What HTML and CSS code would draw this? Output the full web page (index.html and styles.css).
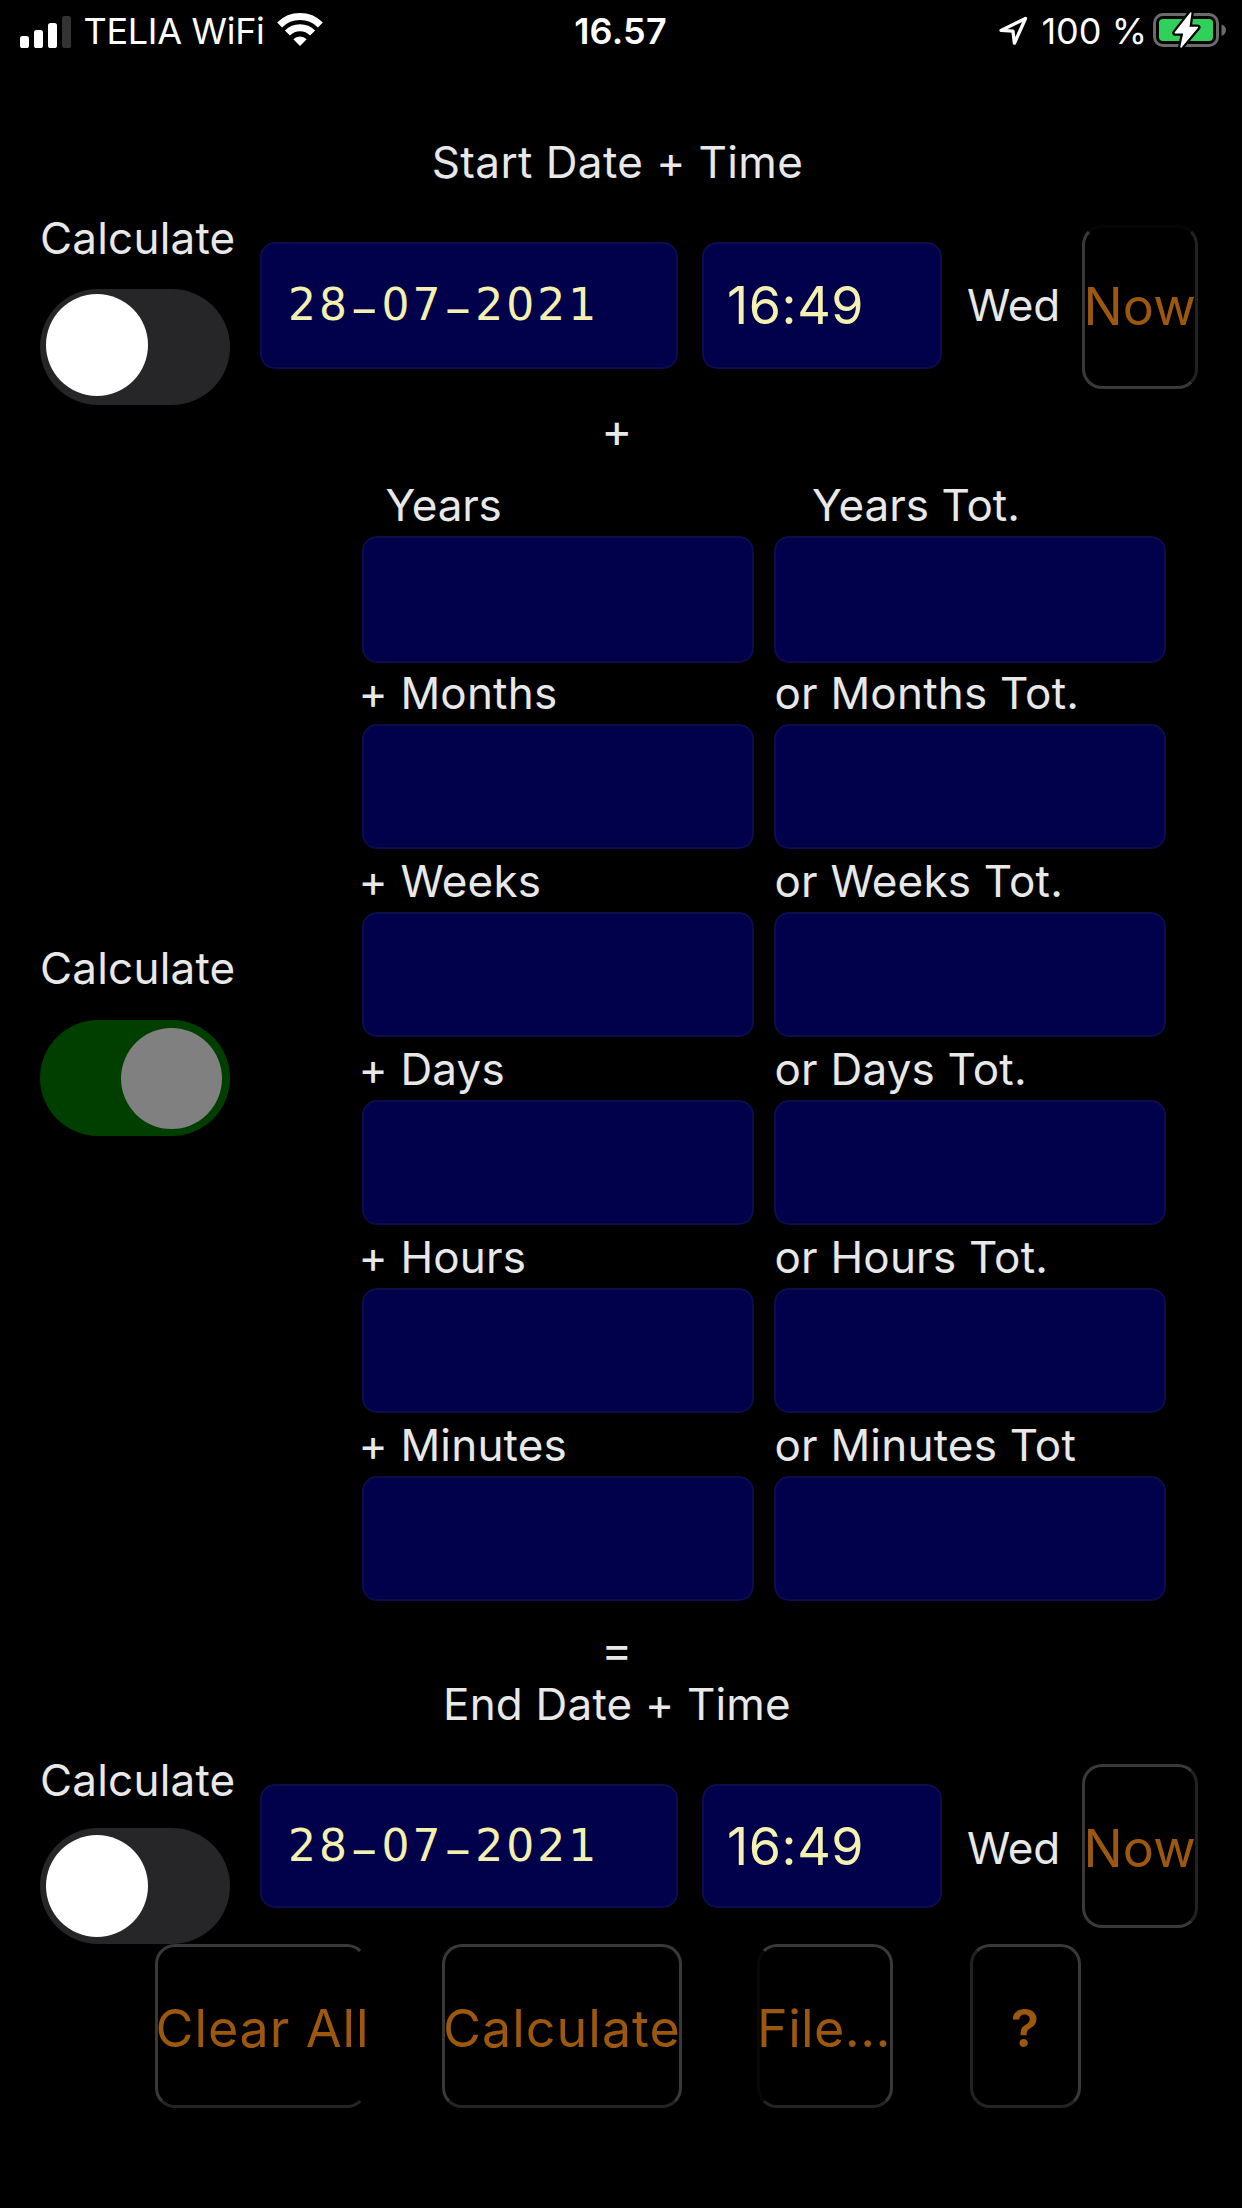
FILE: index.html
```html
<!DOCTYPE html>
<html lang="en">
<head>
<meta charset="utf-8">
<title>Date + Time Calculator</title>
<link rel="stylesheet" href="styles.css">
</head>
<body>
<header class="status">
  <div class="status-left">
    <svg class="signal" width="52" height="33" viewBox="0 0 52 33">
      <rect x="0" y="21" width="9" height="12" rx="2.6" fill="#fff"/>
      <rect x="14" y="15" width="9" height="18" rx="2.6" fill="#fff"/>
      <rect x="28" y="8" width="9" height="25" rx="2.6" fill="#fff"/>
      <rect x="42" y="1" width="9" height="32" rx="2.6" fill="#333"/>
    </svg>
    <span class="carrier">TELIA WiFi</span>
    <svg class="wifi" width="46" height="33" viewBox="0 0 46 33">
      <g fill="none" stroke="#fff" stroke-width="7">
        <path d="M2.6 11.9A29 29 0 0 1 43.4 11.9"/>
        <path d="M10.4 20A17.6 17.6 0 0 1 35.6 20"/>
      </g>
      <path d="M23 33L16.3 26.3A9.6 9.6 0 0 1 29.7 26.3Z" fill="#fff"/>
    </svg>
  </div>
  <div class="clock">16.57</div>
  <div class="status-right">
    <svg class="location" width="30" height="30" viewBox="0 0 30 30">
      <path d="M27.5 2.5L3 14.4L15 15.2L16.4 27.2Z" fill="none" stroke="#fff" stroke-width="3.3" stroke-linejoin="round"/>
    </svg>
    <span class="percent">100 %</span>
    <svg class="battery" width="74" height="36" viewBox="0 0 74 36">
      <rect x="1.5" y="2.5" width="63" height="31" rx="8.5" fill="none" stroke="#6b6b6b" stroke-width="3"/>
      <path d="M68.5 12.5Q73 14 73 18T68.5 24Z" fill="#6b6b6b"/>
      <rect x="6" y="7" width="54" height="22" rx="4" fill="#30d158"/>
      <path d="M37.8 1L22.3 20.8H31L28 35L44.5 15.4H35.7Z" fill="#fff" stroke="#000" stroke-width="6" stroke-linejoin="round" paint-order="stroke"/>
      <path d="M37.8 1L22.3 20.8H31L28 35L44.5 15.4H35.7Z" fill="#fff" stroke="#fff" stroke-width="1.4" stroke-linejoin="round"/>
    </svg>
  </div>
</header>

<main class="app">
  <h1 class="title">Start Date + Time</h1>
  <section class="moment">
    <div class="switch-group">
      <span class="label">Calculate</span>
      <div class="switch"><i class="knob"></i></div>
    </div>
    <div class="field date">28<span class="dash">–</span>07<span class="dash">–</span>2021</div>
    <div class="field time">16:49</div>
    <span class="label weekday">Wed</span>
    <div class="button now now-start">Now</div>
  </section>

  <div class="operator">+</div>

  <section class="duration">
    <div class="switch-group">
      <span class="label">Calculate</span>
      <div class="switch on"><i class="knob"></i></div>
    </div>
    <div class="units">
      <div class="unit first"><span class="label">Years</span><div class="field"></div></div>
      <div class="unit first-total"><span class="label">Years Tot.</span><div class="field"></div></div>
      <div class="unit"><span class="label">+ Months</span><div class="field"></div></div>
      <div class="unit total"><span class="label">or Months Tot.</span><div class="field"></div></div>
      <div class="unit"><span class="label">+ Weeks</span><div class="field"></div></div>
      <div class="unit total"><span class="label">or Weeks Tot.</span><div class="field"></div></div>
      <div class="unit"><span class="label">+ Days</span><div class="field"></div></div>
      <div class="unit total"><span class="label">or Days Tot.</span><div class="field"></div></div>
      <div class="unit"><span class="label">+ Hours</span><div class="field"></div></div>
      <div class="unit total"><span class="label">or Hours Tot.</span><div class="field"></div></div>
      <div class="unit"><span class="label">+ Minutes</span><div class="field"></div></div>
      <div class="unit total"><span class="label">or Minutes Tot</span><div class="field"></div></div>
    </div>
  </section>

  <div class="operator equals">=</div>
  <h1 class="title title-end">End Date + Time</h1>
  <section class="moment end">
    <div class="switch-group">
      <span class="label">Calculate</span>
      <div class="switch"><i class="knob"></i></div>
    </div>
    <div class="field date">28<span class="dash">–</span>07<span class="dash">–</span>2021</div>
    <div class="field time">16:49</div>
    <span class="label weekday">Wed</span>
    <div class="button now">Now</div>
  </section>

  <footer class="actions">
    <div class="button clear">Clear All</div>
    <div class="button calculate">Calculate</div>
    <div class="button file">File...</div>
    <div class="button help">?</div>
  </footer>
</main>
</body>
</html>
```
FILE: styles.css
```css
* { box-sizing: border-box; }

body {
  margin: 0;
  width: 1242px;
  height: 2208px;
  overflow: hidden;
  background: #000;
  color: #e8e8e8;
  font-family: Inter, "Liberation Sans", sans-serif;
  font-size: 44px;
  line-height: 44px;
  letter-spacing: 0.2px;
  white-space: nowrap;
}

svg { display: block; }

/* Status bar */
.status {
  display: grid;
  grid-template-columns: 1fr auto 1fr;
  align-items: center;
  height: 62px;
  padding: 0 15px 0 20px;
  color: #fff;
  font-size: 36px;
  letter-spacing: 0;
}
.status-left, .status-right { display: flex; align-items: center; }
.status-right { justify-content: flex-end; }
.carrier { margin-left: 11.5px; letter-spacing: -0.3px; }
.wifi { margin-left: 12px; margin-top: -3px; }
.clock { padding-right: 6px; font-weight: 600; letter-spacing: 0.2px; }
.percent { margin: 0 6px 0 13px; }
.battery { margin-top: -2px; }

/* Headings and labels */
.app { display: flex; flex-direction: column; }
.title {
  margin: 78px 0 0;
  padding-right: 7px;
  text-align: center;
  font-size: inherit;
  font-weight: 400;
  letter-spacing: 0.4px;
}
.label { display: block; }
.operator {
  margin-top: 4px;
  padding-right: 8px;
  text-align: center;
  font-size: 47px;
}

/* Date and time rows */
.moment {
  display: flex;
  align-items: flex-start;
  height: 189px;
  margin-top: 31px;
  padding-left: 40px;
}
.switch-group {
  display: flex;
  flex-direction: column;
  gap: 30px;
  width: 191px;
}
.moment .switch-group { padding-top: 1px; gap: 29px; }
.switch {
  width: 190px;
  height: 116px;
  padding: 5px 6px;
  border-radius: 58px;
  background: #262628;
}
.knob {
  display: block;
  width: 102px;
  height: 102px;
  border-radius: 50%;
  background: #fff;
}
.switch.on { padding: 8px; background: #003f00; }
.on .knob { width: 101px; height: 101px; margin-left: auto; background: #808080; }

.field {
  height: 125px;
  border: 2px solid #0d0d4c;
  border-radius: 15px;
  background: #00004b;
  color: #f3f0b0;
}
.moment .field {
  display: flex;
  align-items: center;
  height: 127px;
  margin-top: 26.5px;
}
.moment .field.date {
  width: 418px;
  margin-left: 29px;
  padding-left: 26px;
  font-family: "DejaVu Sans", sans-serif;
  letter-spacing: 3px;
}
.dash {
  width: 31.6px;
  padding: 3px 3px 0 0;
  font-size: 52px;
  letter-spacing: 0;
  text-align: center;
}
.moment .field.time {
  width: 240px;
  margin-left: 24px;
  padding: 2px 0 0 23px;
  font-size: 52px;
  letter-spacing: 0.6px;
}
.weekday { width: 115px; margin: 68px 0 0 25px; letter-spacing: -0.3px; }

.button {
  display: flex;
  align-items: center;
  justify-content: center;
  height: 164px;
  border: 3px solid #393939;
  border-radius: 20px;
  color: #9c580f;
  font-size: 52px;
  letter-spacing: 1px;
}
.now { width: 115.5px; margin-top: 10px; border-right-color: #222; letter-spacing: 0.2px; }
.now-start { margin-top: 9.5px; border-top-color: #060606; }

/* Duration grid */
.duration { display: flex; margin-top: 21px; padding-left: 40px; }
.duration .switch-group { padding-top: 473px; }
.units {
  display: grid;
  grid-template-columns: 392px 392px;
  column-gap: 20px;
  margin-left: 130.5px;
}
.unit .label { height: 63px; margin-left: -3px; padding-top: 10px; }
.total .label { margin-left: 1px; }
.first .label { margin-left: 24px; letter-spacing: -0.2px; }
.first-total .label { margin-left: 38.5px; letter-spacing: 0; }
/* The top pair of fields is slightly taller and eats into the label below */
.first .field, .first-total .field { height: 127px; margin-bottom: -2px; }

/* End row */
.equals { margin-top: 26px; }
.title-end { margin-top: 11px; padding-right: 8px; letter-spacing: 0.2px; }
.end { height: 186px; margin-top: 32px; }
.moment.end .switch-group { padding-top: 0; gap: 26px; }
.end .switch { padding-top: 7px; }
.end .field { height: 124px; margin-top: 26px; }
.end .weekday { margin-top: 68px; }
.end .now { margin-top: 6px; padding-top: 5px; }

.actions { display: flex; padding-left: 154.5px; }
.actions .button { padding-top: 5px; border-bottom-color: #242424; }
.actions .clear { width: 212px; padding-left: 4px; border-right-color: transparent; letter-spacing: 0.9px; }
.calculate { width: 240px; margin-left: 75.5px; }
.file { width: 136px; margin-left: 75px; padding-right: 2px; border-left-color: #080808; }
.actions .file { letter-spacing: 0.4px; }
.help { width: 111px; margin-left: 77px; border-left-color: #222; font-weight: 600; }
```
